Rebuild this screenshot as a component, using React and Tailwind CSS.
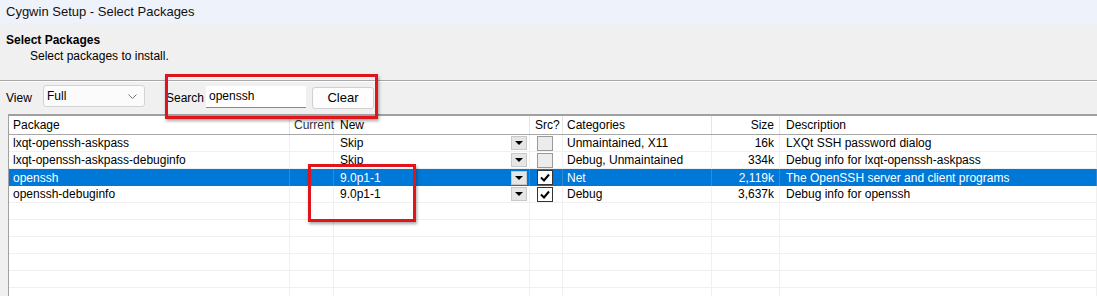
import React from "react";

const rows = [
  { name: "lxqt-openssh-askpass", ver: "Skip", src: false, cat: "Unmaintained, X11", size: "16k", desc: "LXQt SSH password dialog" },
  { name: "lxqt-openssh-askpass-debuginfo", ver: "Skip", src: false, cat: "Debug, Unmaintained", size: "334k", desc: "Debug info for lxqt-openssh-askpass" },
  { name: "openssh", ver: "9.0p1-1", src: true, cat: "Net", size: "2,119k", desc: "The OpenSSH server and client programs", selected: true },
  { name: "openssh-debuginfo", ver: "9.0p1-1", src: true, cat: "Debug", size: "3,637k", desc: "Debug info for openssh" },
];

const cols = "grid grid-cols-[281px_44px_196px_33px_149px_68px_1fr]";

function DropButton() {
  return (
    <div className="w-[16px] h-[14px] bg-[#e6e6e6] border border-[#c8c8c8] flex items-center justify-center">
      <svg width="8" height="4" viewBox="0 0 8 4">
        <path d="M0 0 L8 0 L4 4 Z" fill="#000" />
      </svg>
    </div>
  );
}

function Check({ on }) {
  if (!on) {
    return <div className="w-[16px] h-[15px] bg-[#ececec] border border-[#9a9a9a]" />;
  }
  return (
    <div className="w-[16px] h-[15px] bg-white border border-[#333] flex items-center justify-center">
      <svg width="10" height="9" viewBox="0 0 10 9">
        <path d="M1 4.5 L4 7.5 L9 1.5" stroke="#000" strokeWidth="2" fill="none" />
      </svg>
    </div>
  );
}

function Row({ r }) {
  const sel = r && r.selected;
  const cell = sel
    ? "h-[17px] border-r border-[#2f8bd8] flex items-center"
    : "h-[17px] border-r border-b border-[#f0f0f0] flex items-center";
  return (
    <div className={`${cols} ${sel ? "bg-[#0078d7] text-white" : "text-[#000]"}`}>
      <div className={`${cell} pl-[4px]`}>{r?.name}</div>
      <div className={cell}></div>
      <div className={`${cell} pl-[6px] justify-between pr-[2px]`}>
        <span>{r?.ver}</span>
        {r && <DropButton />}
      </div>
      <div className={`${cell} pl-[7px]`}>{r && <Check on={r.src} />}</div>
      <div className={`${cell} pl-[4px]`}>{r?.cat}</div>
      <div className={`${cell} justify-end pr-[5px]`}>{r?.size}</div>
      <div className={`${cell} pl-[6px]`}>{r?.desc}</div>
    </div>
  );
}

export default function App() {
  const empty = Array.from({ length: 6 });
  return (
    <div className="w-[1097px] h-[296px] overflow-hidden relative bg-[#f0f0f0] text-[12px] text-black font-['Liberation_Sans',Arial,sans-serif]">
      {/* title bar */}
      <div className="h-[23px] bg-[#eef2fa] flex items-center pl-[6px] text-[13px] text-[#111]">
        Cygwin Setup - Select Packages
      </div>

      {/* page header */}
      <div className="h-[58px] pl-[6px] pt-[10px] border-b border-[#a8a8a8]">
        <div className="font-bold leading-[15px]">Select Packages</div>
        <div className="pl-[24px] leading-[15px] mt-[1px]">Select packages to install.</div>
      </div>

      {/* toolbar */}
      <div className="h-[32px] flex items-center border-t border-white">
        <span className="pl-[6px] w-[43px]">View</span>
        <div className="w-[102px] h-[22px] bg-[#fbfbfb] border border-[#d4d4d4] rounded-[3px] flex items-center justify-between pl-[3px] pr-[7px] mb-[3px]">
          <span>Full</span>
          <svg width="9" height="5" viewBox="0 0 9 5">
            <path d="M0.5 0.5 L4.5 4.5 L8.5 0.5" stroke="#777" fill="none" />
          </svg>
        </div>
        <span className="ml-[21px] w-[40px]">Search</span>
        <div className="w-[100px] h-[22px] bg-white border-b border-[#8a8a8a] flex items-start pl-[3px] pt-[1px] mb-[1px]">
          openssh
        </div>
        <button className="ml-[6px] w-[62px] h-[22px] bg-[#fdfdfd] border border-[#d0d0d0] rounded-[3px] text-[13px]">
          Clear
        </button>
      </div>

      {/* list */}
      <div className="ml-[8px] mt-[1px] border-t-2 border-l border-[#a0a0a0] bg-white h-[200px]">
        <div className={`${cols} h-[19px] border-b border-[#a8a8a8] text-[#000]`}>
          <div className="pl-[4px] flex items-center border-r border-[#e5e5e5]">Package</div>
          <div className="pl-[4px] flex items-center border-r border-[#e5e5e5] text-[#333]">Current</div>
          <div className="pl-[6px] flex items-center border-r border-[#e5e5e5]">New</div>
          <div className="pl-[5px] flex items-center border-r border-[#e5e5e5]">Src?</div>
          <div className="pl-[4px] flex items-center border-r border-[#e5e5e5]">Categories</div>
          <div className="pr-[5px] flex items-center justify-end border-r border-[#e5e5e5]">Size</div>
          <div className="pl-[6px] flex items-center">Description</div>
        </div>
        {rows.map((r) => (
          <Row key={r.name} r={r} />
        ))}
        {empty.map((_, i) => (
          <Row key={i} />
        ))}
      </div>

      {/* annotation boxes */}
      <div className="absolute left-[165px] top-[74px] w-[213px] h-[45px] border-[3px] border-[#e0141b] shadow-[1px_2px_3px_rgba(0,0,0,0.35)]" />
      <div className="absolute left-[308px] top-[164px] w-[108px] h-[58px] border-[3px] border-[#e0141b] shadow-[1px_2px_3px_rgba(0,0,0,0.35)]" />
    </div>
  );
}
